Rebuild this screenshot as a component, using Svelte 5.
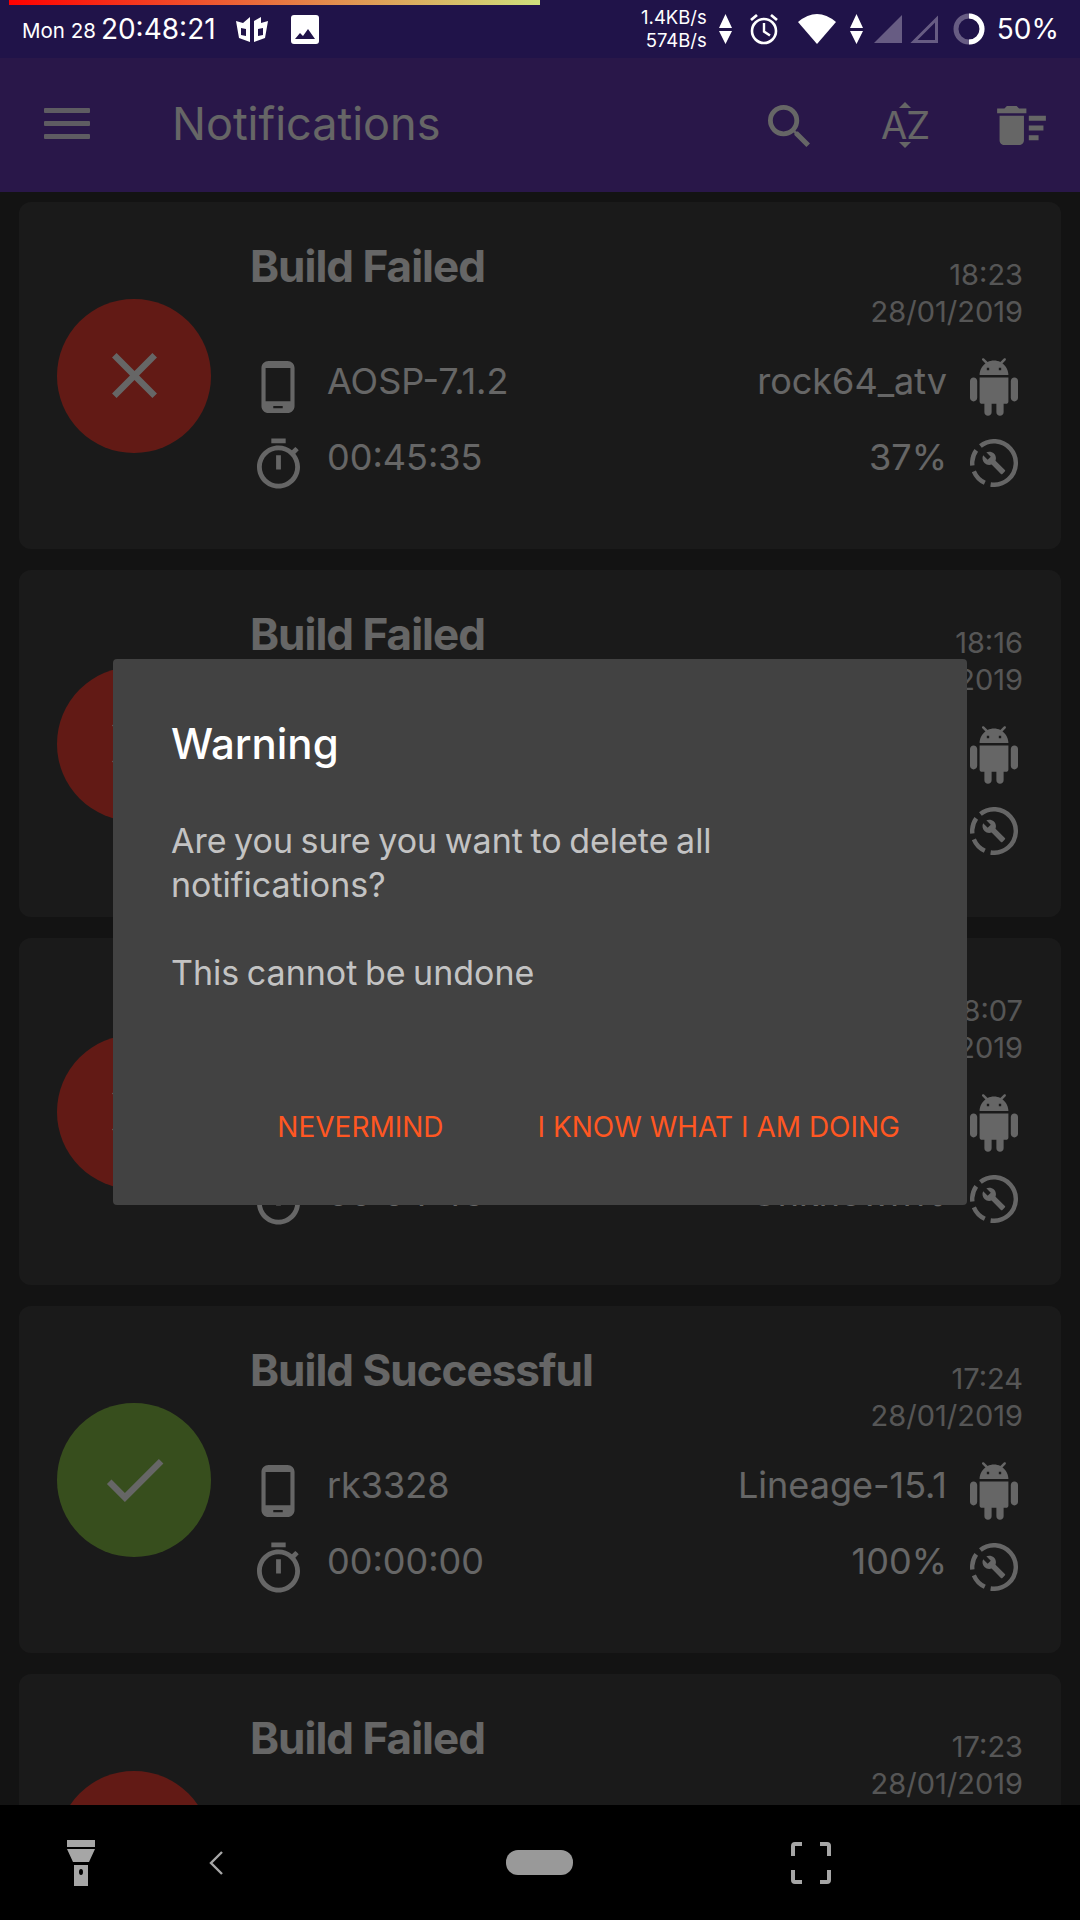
<script>
	const builds = [
		{ ok: false, title: 'Build Failed', time: '18:23', rom: 'AOSP-7.1.2', device: 'rock64_atv', took: '00:45:35', pct: '37%' },
		{ ok: false, title: 'Build Failed', time: '18:16', rom: 'AOSP-7.1.2', device: 'rock64_atv', took: '00:06:12', pct: '12%' },
		{ ok: false, title: 'Build Failed', time: '18:07', rom: 'AOSP-7.1.2', device: 'rock64_atv', took: '00:04:46', pct: 'Unknown%' },
		{ ok: true, title: 'Build Successful', time: '17:24', rom: 'rk3328', device: 'Lineage-15.1', took: '00:00:00', pct: '100%' },
		{ ok: false, title: 'Build Failed', time: '17:23', rom: 'rk3328', device: 'Lineage-15.1', took: '00:00:00', pct: '0%' }
	];
</script>

{#snippet arrows()}
	<svg class="arrows" viewBox="0 0 13 30"><path d="M6.5 0L13 14H0zM0 17h13L6.5 30z" /></svg>
{/snippet}

<div class="screen">
	<header class="status">
		<div class="progress"></div>
		<span class="day">Mon 28</span>
		<span class="clock">20:48:21</span>
		<svg class="mask" viewBox="0 0 32 25">
			<path fill-rule="evenodd" d="M0 4L7 6 14 0V25L3 21ZM5 11V18L10 19V12ZM32 4L25 6V0L18 4V25L29 21ZM22 12V19L27 18V11Z" />
		</svg>
		<svg class="gallery" viewBox="0 0 28 29">
			<rect width="28" height="29" rx="3" fill="#fff" />
			<path d="M4 24l5-6 3 3 5-7 7 10z" fill="#201349" />
		</svg>
		<div class="net">
			<span>1.4KB/s</span>
			<span>574B/s</span>
		</div>
		{@render arrows()}
		<svg class="alarm" viewBox="0 0 30 32" fill="none" stroke="#fff">
			<circle cx="15" cy="18" r="12" stroke-width="2.6" />
			<path d="M15 10v8.5l6 4" stroke-width="2.4" />
			<path d="M2 7l6-5M28 7l-6-5" stroke-width="2.8" />
		</svg>
		<svg class="wifi" viewBox="0 0 38 30"><path d="M19 30L0 8Q19-8 38 8Z" /></svg>
		{@render arrows()}
		<svg class="signal first" viewBox="0 0 28 28"><path d="M28 0V28H0Z" fill="#675c83" /></svg>
		<svg class="signal" viewBox="0 0 28 28" fill="none"><path d="M26.5 4V26.5H4Z" stroke="#675c83" stroke-width="3" /></svg>
		<svg class="ring" viewBox="0 0 32 32" fill="none" stroke-width="5">
			<circle cx="16" cy="16" r="13" stroke="#675c83" />
			<path d="M16 3a13 13 0 0 1 0 26" stroke="#fff" />
		</svg>
		<span class="battery">50%</span>
	</header>

	<main class="main">
		<div class="appbar">
			<div class="burger"><i></i><i></i><i></i></div>
			<h1>Notifications</h1>
			<svg class="search" viewBox="3 3 17.5 17.5"><path d="M15.5 14h-.79l-.28-.27A6.471 6.471 0 0 0 16 9.5 6.5 6.5 0 1 0 9.5 16c1.61 0 3.09-.59 4.23-1.57l.27.28v.79l5 4.99L20.49 19l-4.99-5zm-6 0C7.01 14 5 11.99 5 9.5S7.01 5 9.5 5 14 7.01 14 9.5 11.99 14 9.5 14z" /></svg>
			<div class="sort">
				<i class="up"></i>
				<span>AZ</span>
				<i class="down"></i>
			</div>
			<svg class="sweep" viewBox="2 4 20 16"><path d="M15 16h4v2h-4zm0-8h7v2h-7zm0 4h6v2h-6zM3 18c0 1.1.9 2 2 2h6c1.1 0 2-.9 2-2V8H3v10zM14 5h-3l-1-1H6L5 5H2v2h12z" /></svg>
		</div>

		<div class="list">
			{#each builds as b}
				<article class="card">
					<div class="badge" class:ok={b.ok}>
						<svg viewBox="0 0 24 24">
							{#if b.ok}
								<path d="M9 16.17L4.83 12l-1.42 1.41L9 19 21 7l-1.41-1.41z" />
							{:else}
								<path d="M19 6.41L17.59 5 12 10.59 6.41 5 5 6.41 10.59 12 5 17.59 6.41 19 12 13.41 17.59 19 19 17.59 13.41 12z" />
							{/if}
						</svg>
					</div>
					<div class="body">
						<div class="head">
							<h2>{b.title}</h2>
							<div class="when">
								<span>{b.time}</span>
								<span>28/01/2019</span>
							</div>
						</div>
						<div class="row">
							<svg class="ic phone" viewBox="5 1 14 22"><path d="M16 1H8C6.34 1 5 2.34 5 4v16c0 1.66 1.34 3 3 3h8c1.66 0 3-1.34 3-3V4c0-1.66-1.34-3-3-3zm-2 20h-4v-1h4v1zm3.25-3H6.75V4h10.5v14z" /></svg>
							<span class="val">{b.rom}</span>
							<span class="val end">{b.device}</span>
							<svg class="ic droid" viewBox="2 0 20 24"><path d="M6 18c0 .55.45 1 1 1h1v3.5c0 .83.67 1.5 1.5 1.5s1.5-.67 1.5-1.5V19h2v3.5c0 .83.67 1.5 1.5 1.5s1.5-.67 1.5-1.5V19h1c.55 0 1-.45 1-1V8H6v10zM3.5 8C2.67 8 2 8.67 2 9.5v7c0 .83.67 1.5 1.5 1.5S5 17.33 5 16.5v-7C5 8.67 4.33 8 3.5 8zm17 0c-.83 0-1.5.67-1.5 1.5v7c0 .83.67 1.5 1.5 1.5s1.5-.67 1.5-1.5v-7c0-.83-.67-1.5-1.5-1.5zm-4.97-5.84l1.3-1.3c.2-.2.2-.51 0-.71-.2-.2-.51-.2-.71 0l-1.48 1.48C13.85 1.23 12.95 1 12 1c-.96 0-1.86.23-2.66.63L7.85.15c-.2-.2-.51-.2-.71 0-.2.2-.2.51 0 .71l1.31 1.31C6.97 3.26 6 5.01 6 7h12c0-1.99-.97-3.75-2.47-4.84zM10 5H9V4h1v1zm5 0h-1V4h1v1z" /></svg>
						</div>
						<div class="row">
							<svg class="ic timer" viewBox="3 1 18 21"><path d="M15 1H9v2h6V1zm-4 13h2V8h-2v6zm8.03-6.61l1.42-1.42c-.43-.51-.9-.99-1.41-1.41l-1.42 1.42C16.07 4.74 14.12 4 12 4c-4.97 0-9 4.03-9 9s4.02 9 9 9 9-4.03 9-9c0-2.12-.74-4.07-1.97-5.61zM12 20c-3.87 0-7-3.13-7-7s3.13-7 7-7 7 3.13 7 7-3.13 7-7 7z" /></svg>
							<span class="val">{b.took}</span>
							<span class="val end">{b.pct}</span>
							<svg class="ic tool" viewBox="0 0 48 48">
								<circle cx="24" cy="24" r="21.8" fill="none" stroke="#fff" stroke-width="4.4" stroke-dasharray="70 6 16 6 16 6 17 0" transform="rotate(-86 24 24)" />
								<path transform="translate(11.5 11.5) scale(1.03)" d="M22.7 19l-9.1-9.1c.9-2.3.4-5-1.5-6.9-2-2-5-2.4-7.4-1.3L9 6 6 9 1.6 4.7C.4 7.1.9 10.1 2.9 12.1c1.9 1.9 4.6 2.4 6.9 1.5l9.1 9.1c.4.4 1 .4 1.4 0l2.3-2.3c.5-.4.5-1.1.1-1.4z" />
							</svg>
						</div>
					</div>
				</article>
			{/each}
		</div>

		<div class="scrim">
			<div class="dialog">
				<h3>Warning</h3>
				<p>Are you sure you want to delete all notifications?</p>
				<p>This cannot be undone</p>
				<div class="actions">
					<button>NEVERMIND</button>
					<button>I KNOW WHAT I AM DOING</button>
				</div>
			</div>
		</div>
	</main>

	<nav class="nav">
		<svg class="torch" viewBox="0 0 30 46">
			<path d="M1 0H29V7H1zM1 9H29L23 22H7zM8 25H22V46H8z" fill="#a6a6a6" />
			<ellipse cx="15" cy="32" rx="2" ry="3" fill="#000" />
		</svg>
		<svg class="back" viewBox="0 0 14 24" fill="none"><path d="M13 1L2 12l11 11" stroke="#a6a6a6" stroke-width="2.4" /></svg>
		<div class="pill"></div>
		<svg class="frame" viewBox="0 0 40 42" fill="none" stroke="#a6a6a6" stroke-width="4">
			<path d="M2 14V4Q2 2 4 2H11M29 2H36Q38 2 38 4V14M2 28V38Q2 40 4 40H11M29 40H36Q38 40 38 38V28" />
		</svg>
	</nav>
</div>

<style>
	:global(body) {
		margin: 0;
		background: #000;
	}
	.screen {
		width: 1080px;
		height: 1920px;
		display: flex;
		flex-direction: column;
		overflow: hidden;
		font-family: Inter, "Noto Sans", sans-serif;
		color: #fff;
	}

	/* status bar */
	.status {
		position: relative;
		height: 58px;
		flex: none;
		display: flex;
		align-items: center;
		padding: 0 21px 0 22px;
		box-sizing: border-box;
		background: #201349;
	}
	.progress {
		position: absolute;
		left: 9px;
		top: 0;
		width: 531px;
		height: 5px;
		background: linear-gradient(90deg, #f00, #f0502c 35%, #e2904f 62%, #cfe07c);
	}
	.day { font-size: 20.5px; margin-top: 3px; }
	.clock { font-size: 28px; margin-left: 5px; }
	.mask { width: 32px; height: 25px; margin-left: 20px; fill: #fff; }
	.gallery { width: 28px; height: 29px; margin-left: 23px; }
	.net {
		margin-left: auto;
		display: flex;
		flex-direction: column;
		align-items: flex-end;
		font-size: 18.5px;
		line-height: 23px;
		width: 100px;
	}
	.arrows { width: 13px; height: 30px; margin-left: 12px; fill: #fff; }
	.alarm { width: 30px; height: 32px; margin-left: 17px; }
	.wifi { width: 38px; height: 30px; margin: 0 2px 0 19px; fill: #fff; }
	.signal { width: 28px; height: 28px; margin-left: 8px; }
	.signal.first { margin-left: 11px; }
	.ring { width: 32px; height: 32px; margin-left: 15px; }
	.battery { font-size: 28px; margin-left: 12px; }

	/* page under the dialog */
	.main {
		position: relative;
		flex: 1;
		min-height: 0;
		display: flex;
		flex-direction: column;
		background: #303030;
	}
	.appbar {
		height: 134px;
		flex: none;
		display: flex;
		align-items: center;
		background: #673ab7;
	}
	.burger {
		width: 46px;
		margin: 0 0 4px 44px;
		display: flex;
		flex-direction: column;
		gap: 8px;
	}
	.burger i {
		height: 5px;
		border-radius: 1px;
		background: rgba(255, 255, 255, 0.87);
	}
	h1 {
		margin: 0 0 4px 82px;
		font-size: 45px;
		font-weight: 400;
		flex: 1;
	}
	.search { width: 42px; height: 42px; fill: #fff; margin-right: 70px; margin-top: 2px; }
	.sort {
		width: 50px;
		margin-right: 67px;
		display: flex;
		flex-direction: column;
		align-items: center;
		gap: 2px;
	}
	.sort span { font-size: 38px; line-height: 30px; letter-spacing: -1px; }
	.sort i { width: 0; height: 0; border-left: 6px solid transparent; border-right: 6px solid transparent; }
	.sort .up { border-bottom: 6px solid #fff; }
	.sort .down { border-top: 6px solid #fff; }
	.sweep { width: 49px; height: 39px; fill: #fff; margin-right: 34px; }

	.list {
		flex: 1;
		min-height: 0;
		overflow: hidden;
		display: flex;
		flex-direction: column;
		gap: 21px;
		padding: 10px 19px 0;
	}
	.card {
		height: 347px;
		flex: none;
		display: flex;
		align-items: center;
		padding: 0 38px;
		border-radius: 12px;
		background: #424242;
	}
	.badge {
		width: 154px;
		height: 154px;
		flex: none;
		margin-right: 39px;
		border-radius: 50%;
		background: #f44336;
		display: flex;
		align-items: center;
		justify-content: center;
	}
	.badge.ok { background: #8bc34a; }
	.badge svg { width: 77px; height: 77px; fill: #fff; }
	.body {
		flex: 1;
		min-width: 0;
		align-self: stretch;
		display: flex;
		flex-direction: column;
	}
	.head {
		height: 147px;
		flex: none;
		display: flex;
		justify-content: space-between;
		align-items: flex-start;
	}
	h2 {
		margin: 36px 0 0;
		font-size: 44px;
		line-height: 56px;
		font-weight: 700;
		letter-spacing: -1px;
	}
	.when {
		margin-top: 54px;
		display: flex;
		flex-direction: column;
		align-items: flex-end;
		font-size: 29px;
		line-height: 37px;
		color: #d8d8d8;
	}
	.row {
		height: 76px;
		display: flex;
		align-items: center;
	}
	.val { font-size: 36px; padding-bottom: 12px; }
	.val.end { margin-left: auto; margin-right: 23px; }
	.ic { fill: #fff; flex: none; }
	.phone { width: 34px; height: 52px; margin: 0 32px 0 11px; }
	.timer { width: 43px; height: 51px; margin: 0 27px 0 7px; }
	.droid, .tool { width: 48px; margin-right: 5px; }
	.droid { height: 58px; }
	.tool { height: 48px; }

	/* dialog */
	.scrim {
		position: absolute;
		inset: 0;
		display: flex;
		align-items: center;
		justify-content: center;
		background: rgba(0, 0, 0, 0.6);
	}
	.dialog {
		width: 854px;
		height: 546px;
		box-sizing: border-box;
		display: flex;
		flex-direction: column;
		padding: 59px 58px 0;
		border-radius: 4px;
		background: #424242;
	}
	h3 { margin: 0 0 49px; font-size: 42px; line-height: 52px; font-weight: 500; }
	p {
		margin: 0 0 44px;
		font-size: 34px;
		line-height: 44px;
		word-spacing: -2px;
		color: rgba(255, 255, 255, 0.7);
	}
	.actions {
		margin-top: auto;
		margin-bottom: 60px;
		display: flex;
		justify-content: flex-end;
		gap: 94px;
		padding-right: 9px;
	}
	button {
		padding: 0;
		border: 0;
		background: none;
		font: inherit;
		font-size: 28px;
		line-height: 36px;
		color: #ff5722;
	}

	/* system nav */
	.nav {
		height: 115px;
		flex: none;
		display: flex;
		align-items: center;
		background: #000;
	}
	.torch { width: 30px; height: 46px; margin-left: 66px; }
	.back { width: 14px; height: 24px; margin-left: 113px; }
	.pill { width: 67px; height: 25px; margin-left: 283px; border-radius: 12px; background: #999; }
	.frame { width: 40px; height: 42px; margin-left: 218px; }
</style>
